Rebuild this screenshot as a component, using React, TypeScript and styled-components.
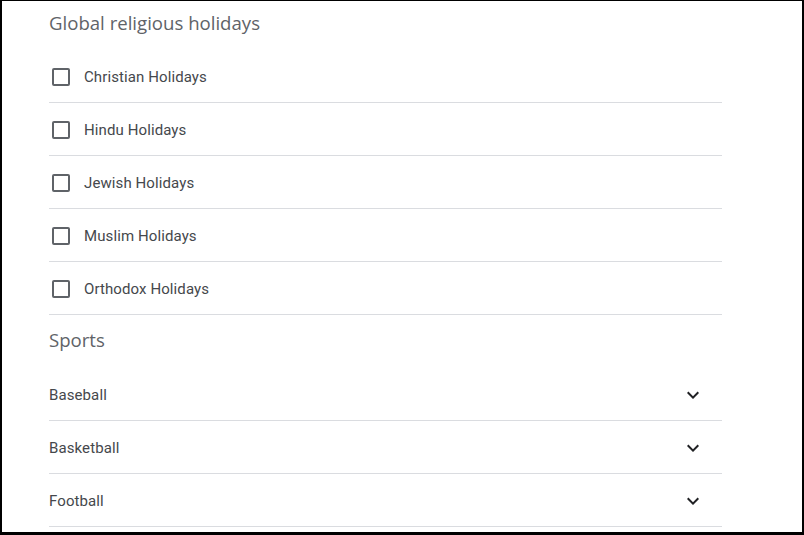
import React from 'react';
import styled, { createGlobalStyle } from 'styled-components';

const GlobalStyle = createGlobalStyle`
  html, body {
    margin: 0;
    padding: 0;
    background: #ffffff;
  }
  body {
    font-family: Roboto, 'Noto Sans', Arial, sans-serif;
  }
`;

const Frame = styled.div`
  box-sizing: border-box;
  width: 804px;
  height: 535px;
  overflow: hidden;
  background: #ffffff;
  border-style: solid;
  border-color: #000000;
  border-width: 1px 2px 3px 2px;
`;

const Content = styled.div`
  width: 673px;
  margin-left: 47px;
  display: flex;
  flex-direction: column;
`;

const Heading = styled.h2<{ $first?: boolean }>`
  margin: 0;
  height: ${(p) => (p.$first ? '49px' : '53px')};
  display: flex;
  align-items: center;
  padding-bottom: ${(p) => (p.$first ? '6px' : '4px')};
  box-sizing: border-box;
  font-family: 'Open Sans', Roboto, sans-serif;
  font-weight: 400;
  font-size: 18.6px;
  color: #5f6368;
`;

const Row = styled.div`
  height: 53px;
  box-sizing: border-box;
  border-bottom: 1px solid #dadce0;
  display: flex;
  align-items: center;
  padding: 1px 17px 0 0;
`;

const Box = styled.span`
  width: 18px;
  height: 18px;
  box-sizing: border-box;
  border: 2px solid #5f6368;
  border-radius: 2px;
  margin: 0 14px 0 3px;
  flex-shrink: 0;
`;

const Label = styled.span`
  font-size: 15px;
  color: #45484c;
  letter-spacing: 0.1px;
  flex: 1;
`;

const Chevron = () => (
  <svg width="24" height="24" viewBox="0 0 24 24" aria-hidden="true">
    <path d="M16.59 8.59L12 13.17 7.41 8.59 6 10l6 6 6-6z" fill="#202124" />
  </svg>
);

const holidays = [
  'Christian Holidays',
  'Hindu Holidays',
  'Jewish Holidays',
  'Muslim Holidays',
  'Orthodox Holidays',
];

const sports = ['Baseball', 'Basketball', 'Football'];

export default function App() {
  return (
    <>
      <GlobalStyle />
      <Frame>
        <Content>
          <Heading $first>Global religious holidays</Heading>
          {holidays.map((h) => (
            <Row key={h}>
              <Box />
              <Label>{h}</Label>
            </Row>
          ))}
          <Heading>Sports</Heading>
          {sports.map((s) => (
            <Row key={s}>
              <Label>{s}</Label>
              <Chevron />
            </Row>
          ))}
        </Content>
      </Frame>
    </>
  );
}
